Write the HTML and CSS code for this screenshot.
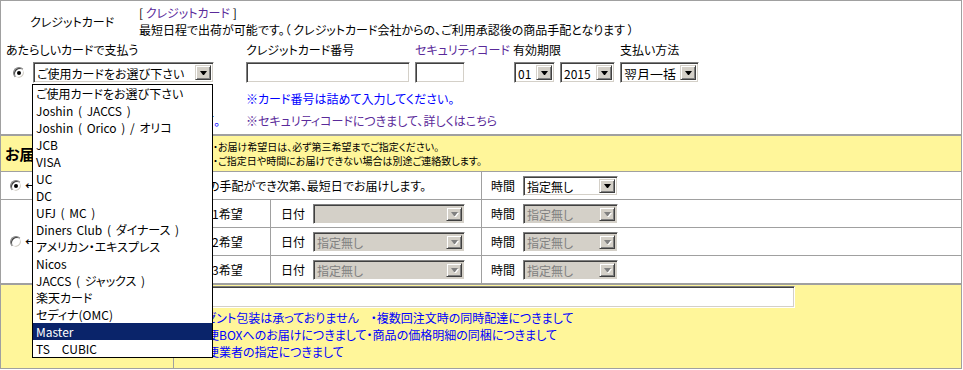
FILE: index.html
```html
<!DOCTYPE html>
<html lang="ja">
<head>
  <meta charset="UTF-8">
  <link rel="stylesheet" href="styles.css">
</head>
<body>
  <div class="frame">
    <div class="card-pay">
      <div class="pay-head">
        <div class="pay-title">クレジットカード</div>
        <div class="pay-desc">
          <div>[ <a href="#" class="visited">クレジットカード</a> ]</div>
          <div>最短日程で出荷が可能です。（ クレジットカード会社からの、ご利用承認後の商品手配となります ）</div>
        </div>
      </div>

      <div class="pay-form">
        <div class="lbl lbl-new">あたらしいカードで支払う</div>
        <div class="lbl">クレジットカード番号</div>
        <div class="lbl"><a href="#" class="visited">セキュリティコード</a></div>
        <div class="lbl">有効期限</div>
        <div class="lbl">支払い方法</div>

        <div class="ctl ctl-new">
          <span class="radio checked"></span>
          <div class="select w-card"><span class="select-value">ご使用カードをお選び下さい</span><span class="select-btn"><i></i></span></div>
        </div>
        <div class="ctl"><input type="text" class="textbox w-num"></div>
        <div class="ctl"><input type="text" class="textbox w-code"></div>
        <div class="ctl">
          <div class="select w-month"><span class="select-value">01</span><span class="select-btn"><i></i></span></div>
          <div class="select w-year"><span class="select-value">2015</span><span class="select-btn"><i></i></span></div>
        </div>
        <div class="ctl">
          <div class="select w-pay"><span class="select-value big">翌月一括</span><span class="select-btn"><i></i></span></div>
        </div>

        <div class="note"></div>
        <div class="note wide"><a href="#">※カード番号は詰めて入力してください。</a></div>
        <div class="note second left"><a href="#">登録済みのカードについて。</a></div>
        <div class="note second wide"><a href="#" class="visited">※セキュリティコードにつきまして、詳しくはこちら</a></div>
      </div>
    </div>

    <div class="delivery">
      <div class="d-head">
        <span class="d-title">お届け日時指定</span>
        <div class="d-notes">
          <div>・お届け希望日は、必ず第三希望までご指定ください。</div>
          <div>・ご指定日や時間にお届けできない場合は別途ご連絡致します。</div>
        </div>
      </div>

      <div class="d-asap"><span class="radio checked"></span><span class="arrow">←</span>ご注文確定後、すべての在庫商品の手配ができ次第、最短日でお届けします。</div>
      <div class="d-time">
        <span class="d-lbl">時間</span>
        <div class="select w-time"><span class="select-value">指定無し</span><span class="select-btn"><i></i></span></div>
      </div>

      <div class="d-pick"><span class="radio"></span><span class="arrow">←</span>日時を指定する</div>

      <div class="d-rank">第1希望</div>
      <div class="d-date">
        <span class="d-lbl">日付</span>
        <div class="select disabled w-date"><span class="select-value"></span><span class="select-btn"><i></i></span></div>
      </div>
      <div class="d-time">
        <span class="d-lbl">時間</span>
        <div class="select disabled w-time"><span class="select-value">指定無し</span><span class="select-btn"><i></i></span></div>
      </div>

      <div class="d-rank">第2希望</div>
      <div class="d-date">
        <span class="d-lbl">日付</span>
        <div class="select disabled w-date"><span class="select-value">指定無し</span><span class="select-btn"><i></i></span></div>
      </div>
      <div class="d-time">
        <span class="d-lbl">時間</span>
        <div class="select disabled w-time"><span class="select-value">指定無し</span><span class="select-btn"><i></i></span></div>
      </div>

      <div class="d-rank">第3希望</div>
      <div class="d-date">
        <span class="d-lbl">日付</span>
        <div class="select disabled w-date"><span class="select-value">指定無し</span><span class="select-btn"><i></i></span></div>
      </div>
      <div class="d-time">
        <span class="d-lbl">時間</span>
        <div class="select disabled w-time"><span class="select-value">指定無し</span><span class="select-btn"><i></i></span></div>
      </div>
    </div>

    <div class="extra">
      <div class="extra-side"></div>
      <div class="extra-main">
        <input type="text" class="textbox w-memo">
        <div class="extra-links">
          <div><a href="#">・プレゼント包装は承っておりません</a>　<a href="#">・複数回注文時の同時配達につきまして</a></div>
          <div><a href="#">・宅配便BOXへのお届けにつきまして</a><a href="#">・商品の価格明細の同梱につきまして</a></div>
          <div><a href="#">・宅配便業者の指定につきまして</a></div>
        </div>
      </div>
    </div>
  </div>

  <!-- open list of the card select -->
  <ul class="card-list">
    <li>ご使用カードをお選び下さい</li>
    <li>Joshin ( JACCS )</li>
    <li>Joshin ( Orico ) / オリコ</li>
    <li>JCB</li>
    <li>VISA</li>
    <li>UC</li>
    <li>DC</li>
    <li>UFJ ( MC )</li>
    <li>Diners Club ( ダイナース )</li>
    <li>アメリカン・エキスプレス</li>
    <li>Nicos</li>
    <li>JACCS ( ジャックス )</li>
    <li>楽天カード</li>
    <li>セディナ(OMC)</li>
    <li class="selected">Master</li>
    <li>TS　CUBIC</li>
  </ul>
</body>
</html>
```

FILE: styles.css
```css
body {
  margin: 0;
  font-family: "Noto Sans CJK JP", sans-serif;
  font-size: 12px;
  font-feature-settings: "palt";
  color: #000;
  background-color: #fff;
}

a {
  color: #0000ff;
  text-decoration: none;
}

a.visited {
  color: #5a2a9a;
}

.frame {
  display: flex;
  flex-direction: column;
  width: 962px;
  height: 369px;
  box-sizing: border-box;
  border: 1px solid #a0a0a0;
}

/* credit card block */
.card-pay {
  height: 133px;
  flex: none;
  border-bottom: 2px solid #a0a0a0;
}

.pay-head {
  display: grid;
  grid-template-columns: 138px 1fr;
  padding-top: 3px;
  line-height: 17px;
}

.pay-title {
  align-self: center;
  padding-left: 29px;
}

.pay-form {
  display: grid;
  grid-template-columns: 245px 169px 98px 107px 1fr;
  margin-top: 4px;
}

.lbl {
  line-height: 16px;
}

.lbl-new {
  padding-left: 5px;
}

.ctl {
  display: flex;
  gap: 5px;
  height: 21px;
  margin-top: 4px;
}

.ctl-new {
  gap: 0;
  align-items: center;
}

.ctl-new .radio {
  margin: 0 8px 0 12px;
}

.note {
  line-height: 17px;
  margin-top: 7px;
}

.note.second {
  margin-top: 5px;
}

.note.wide {
  grid-column: 2 / -1;
}

.note.left {
  text-align: right;
  padding-right: 26px;
}

/* form controls, windows classic look */
.textbox {
  box-sizing: border-box;
  height: 21px;
  margin: 0;
  padding: 0 2px;
  border: 1px solid;
  border-color: #808080 #fff #fff #808080;
  box-shadow: inset 1px 1px 0 #404040, inset -1px -1px 0 #d4d0c8;
  background-color: #fff;
  font: inherit;
  outline: none;
}

.w-num { width: 164px; }
.w-code { width: 50px; }
.w-memo { width: 618px; height: 22px; }

.select {
  display: flex;
  box-sizing: border-box;
  height: 21px;
  padding: 2px;
  border: 1px solid;
  border-color: #808080 #fff #fff #808080;
  box-shadow: inset 1px 1px 0 #404040, inset -1px -1px 0 #d4d0c8;
  background-color: #fff;
}

.select-value {
  flex: 1;
  padding-left: 1px;
  line-height: 17px;
  white-space: nowrap;
  overflow: hidden;
}

.select-value.big {
  font-size: 13px;
}

.select-btn {
  display: flex;
  align-items: center;
  justify-content: center;
  flex: none;
  width: 16px;
  box-sizing: border-box;
  border: 1px solid;
  border-color: #d4d0c8 #404040 #404040 #d4d0c8;
  box-shadow: inset 1px 1px 0 #fff, inset -1px -1px 0 #808080;
  background-color: #d4d0c8;
}

.select-btn i {
  width: 1px;
  height: 0;
  border-left: 3px solid transparent;
  border-right: 3px solid transparent;
  border-top: 4px solid #000;
}

.select.disabled {
  background-color: #d4d0c8;
  color: #808080;
}

.select.disabled .select-btn i {
  border-top-color: #808080;
  filter: drop-shadow(1px 1px 0 #fff);
}

.w-card { width: 181px; }
.w-month { width: 41px; margin-left: 1px; }
.w-year { width: 55px; }
.w-pay { width: 79px; }
.w-date { width: 152px; }
.w-time { width: 95px; }

.radio {
  position: relative;
  flex: none;
  width: 12px;
  height: 12px;
  box-sizing: border-box;
  border: 1px solid;
  border-color: #808080 #fff #fff #808080;
  border-radius: 50%;
  box-shadow: inset 1px 1px 0 #404040, inset -1px -1px 0 #d4d0c8;
  background-color: #fff;
}

.radio.checked:after {
  content: "";
  position: absolute;
  left: 3px;
  top: 3px;
  width: 4px;
  height: 4px;
  border-radius: 50%;
  background-color: #000;
}

/* delivery table */
.delivery {
  display: grid;
  flex: none;
  grid-template-columns: 194px 74px 210px 1fr;
  grid-template-rows: 35px repeat(4, 27px);
  gap: 1px;
  background-color: #a0a0a0;
  border-bottom: 2px solid #a0a0a0;
}

.delivery > div {
  display: flex;
  align-items: center;
  background-color: #fff;
  white-space: nowrap;
  overflow: hidden;
}

.delivery .d-head {
  grid-column: 1 / -1;
  background-color: #fff69a;
}

.d-title {
  width: 212px;
  padding-left: 4px;
  box-sizing: border-box;
  font-size: 15px;
  font-weight: bold;
}

.d-notes {
  font-size: 10px;
  line-height: 14px;
}

.d-asap {
  grid-column: 1 / 4;
  padding-left: 9px;
}

.d-pick {
  grid-row: 3 / span 3;
  padding-left: 9px;
}

.arrow {
  margin: 0 4px 0 3px;
  font-size: 10px;
  font-weight: bold;
}

.d-rank {
  padding-left: 4px;
}

.d-date,
.d-time {
  gap: 8px;
}

.d-date {
  padding-left: 10px;
}

.d-time {
  padding-left: 9px;
}

.d-lbl {
  width: 24px;
}

.d-date .select,
.d-time .select {
  height: 20px;
}

.d-date .select-value,
.d-time .select-value {
  line-height: 16px;
}

/* bottom notes */
.extra {
  display: grid;
  flex: 1;
  grid-template-columns: 172px 1fr;
  gap: 1px;
  background-color: #a0a0a0;
}

.extra-side,
.extra-main {
  background-color: #fff69a;
}

.extra-main {
  padding: 1px 0 0 3px;
}

.w-memo {
  display: block;
}

.extra-links {
  padding-top: 1px;
  line-height: 17px;
}

/* opened dropdown of the card select */
.card-list {
  position: absolute;
  left: 32px;
  top: 84px;
  width: 181px;
  box-sizing: border-box;
  margin: 0;
  padding: 0;
  list-style: none;
  border: 1px solid #000;
  background-color: #fff;
}

.card-list li {
  height: 17px;
  padding-left: 3px;
  line-height: 17px;
  word-spacing: 2px;
  white-space: nowrap;
}

.card-list li.selected {
  background-color: #0a246a;
  color: #fff;
}
```
